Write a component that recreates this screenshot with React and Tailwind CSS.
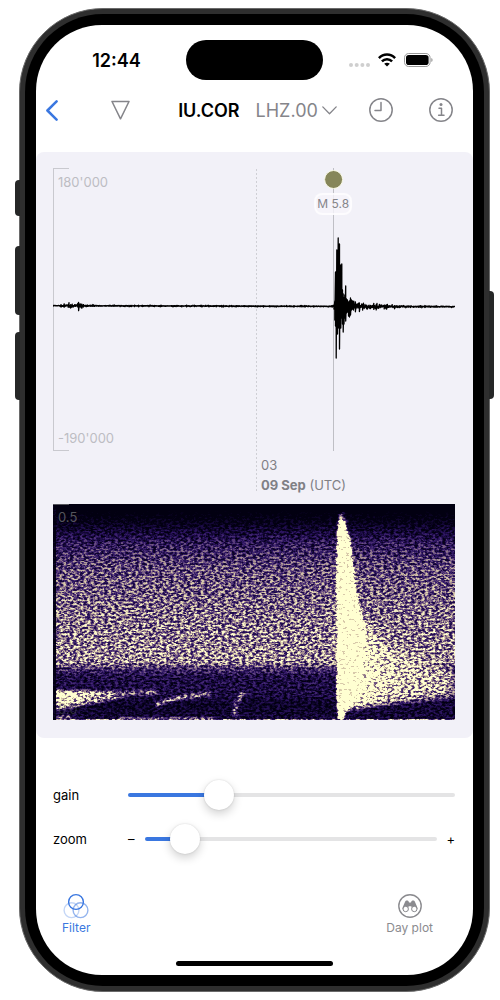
import { useState } from "react";

function makeRandom(seed) {
  let s = seed;
  return () => {
    s = (s * 1664525 + 1013904223) % 4294967296;
    return s / 4294967296;
  };
}

// Main arrival: x, upper and lower extent relative to the baseline.
const EVENT = [
  [280.5, 1, 3], [281.3, 5, 14], [282, 34, 20], [282.7, 20, 52], [283.3, 56, 20],
  [284, 40, 28], [284.7, 68, 17], [285.3, 62, 22], [286, 62, 43], [286.7, 30, 20],
  [287.3, 41, 22], [288.3, 42, 12], [289, 16, 18], [289.7, 12, 26], [290.5, 8, 18],
  [291.3, 11, 12], [292.2, 20, 15], [293, 7, 7], [294, 6, 6], [295, 4, 10],
  [296, 5, 11], [297, 8, 9], [298, 6, 4], [299, 5, 3], [300, 4, 4],
];

function noiseAmplitude(x) {
  if (x < 7) return 0.8;
  if (x < 30) return 1.4 + 5 * Math.exp(-Math.pow((x - 17) / 4, 2)) + (x > 24 && x < 29 ? 4 : 0);
  if (x < 42) return 1.7;
  if (x > 300) return 0.9 + 8 * Math.exp(-(x - 300) / 24);
  return 0.9;
}

function waveformPath() {
  const rand = makeRandom(11);
  let d = "M0 137";
  for (let x = 0; x <= 402; x += 0.8) {
    if (x > 280 && x < 300.5) continue;
    const a = noiseAmplitude(x);
    const base = 137.7 + x / 400;
    const spike = rand() > 0.75 ? 1 : 0.5;
    d += `L${x.toFixed(1)} ${(base - a * spike * rand()).toFixed(1)}V${(base + a * spike * rand()).toFixed(1)}`;
    if (x <= 280 && x + 0.8 > 280) {
      EVENT.forEach(([ex, up, down]) => {
        d += `L${ex + 0.5} ${138 - up}V${138 + down}`;
      });
    }
  }
  return d;
}

const WAVEFORM = waveformPath();

function SideButtons() {
  return (
    <div aria-hidden="true">
      <span className="absolute -left-[5px] top-[171px] h-9 w-[5px] rounded-l-sm bg-[#262727]" />
      <span className="absolute -left-[5px] top-[237px] h-[69px] w-[5px] rounded-l-sm bg-[#262727]" />
      <span className="absolute -left-[5px] top-[323px] h-[68px] w-[5px] rounded-l-sm bg-[#262727]" />
      <span className="absolute -right-[5px] top-[282px] h-[108px] w-[5px] rounded-r-sm bg-[#262727]" />
    </div>
  );
}

function StatusBar() {
  return (
    <div className="grid grid-cols-[1fr_137px_1fr] items-center pt-[15px]">
      <span className="pt-px pl-[11px] text-center text-[18px] leading-6 font-semibold text-black">12:44</span>
      <span className="h-10 rounded-full bg-black" />
      <div className="flex items-center justify-center gap-2 pr-[14px]">
        <svg width="21" height="14" viewBox="0 0 21 14" fill="#cfcfcf" aria-hidden="true">
          <circle cx="2" cy="12" r="2" /><circle cx="7.7" cy="12" r="2" />
          <circle cx="13.4" cy="12" r="2" /><circle cx="19" cy="12" r="2" />
        </svg>
        <svg width="18" height="14" viewBox="0 0 18 14" aria-hidden="true">
          <g fill="none" stroke="#000" strokeWidth="2.5">
            <path d="M.9 5.2C5.4 .4 12.6 .4 17.1 5.2" />
            <path d="M3.9 8.4C6.7 5.5 11.3 5.5 14.1 8.4" />
          </g>
          <path d="M9 13.6L6.2 10.8C7.8 9.3 10.2 9.3 11.8 10.8Z" fill="#000" />
        </svg>
        <svg width="29" height="14" viewBox="0 0 29 14" aria-hidden="true">
          <rect x=".5" y=".5" width="25.6" height="13" rx="4.2" fill="none" stroke="#999" />
          <rect x="2" y="2" width="22.6" height="10" rx="2.8" fill="#000" />
          <path d="M27.4 5V9C28.9 8.3 28.9 5.7 27.4 5Z" fill="#888" />
        </svg>
      </div>
    </div>
  );
}

function Header() {
  return (
    <header className="flex h-[60px] items-center pr-5 pl-[10px] text-[#85858a]">
      <div className="flex items-center gap-[53px]">
        <button type="button" aria-label="Back" className="text-[#3a77e0]">
          <svg width="12" height="21" viewBox="0 0 12 21" fill="none" stroke="currentColor" strokeWidth="2.5" strokeLinecap="round" strokeLinejoin="round">
            <path d="M10.6 1.4L1.4 10.5L10.6 19.6" />
          </svg>
        </button>
        <button type="button" aria-label="Stations">
          <svg width="19" height="20" viewBox="0 0 19 20" fill="none" stroke="currentColor" strokeWidth="1.5" strokeLinejoin="round">
            <path d="M1 1.5H18L9.5 18.8Z" />
          </svg>
        </button>
      </div>
      <div className="flex flex-1 items-center justify-center gap-4 pt-px pl-4 text-[18px] leading-6">
        <h1 className="font-semibold text-black">IU.COR</h1>
        <button type="button" className="flex items-center gap-1">
          LHZ.00
          <svg width="15" height="9" viewBox="0 0 15 9" fill="none" stroke="currentColor" strokeWidth="1.3" strokeLinecap="round" strokeLinejoin="round" aria-hidden="true">
            <path d="M.8 .9L7.5 7.8L14.2 .9" />
          </svg>
        </button>
      </div>
      <div className="flex items-center gap-9">
        <button type="button" aria-label="Time range">
          <svg width="24" height="24" viewBox="0 0 24 24" fill="none" stroke="currentColor" strokeWidth="1.5" strokeLinecap="round" strokeLinejoin="round">
            <circle cx="12" cy="12" r="11.2" /><path d="M12 4.6V12.4H6" />
          </svg>
        </button>
        <button type="button" aria-label="Info">
          <svg width="24" height="24" viewBox="0 0 24 24" fill="none" stroke="currentColor" strokeWidth="1.5" strokeLinecap="round" strokeLinejoin="round">
            <circle cx="12" cy="12" r="11.2" />
            <circle cx="12" cy="6.6" r="1.5" fill="currentColor" stroke="none" />
            <path d="M10 10.3H12.5V17.3M9.6 17.3H15" />
          </svg>
        </button>
      </div>
    </header>
  );
}

function Seismogram() {
  return (
    <div className="relative">
      <svg className="absolute inset-y-0 left-[50.5%] h-full w-px" aria-hidden="true">
        <path d="M.5 1V324" stroke="#cfcfd5" strokeDasharray="2 2" />
      </svg>
      <div className="relative text-[13px] leading-5 text-[#bdbdc3]">
        <span className="absolute top-0 bottom-0 left-0 w-4 border-y border-[#c9c9cf]" />
        <span className="absolute top-0 bottom-0 left-0 border-l border-[#c9c9cf]" />
        <span className="absolute top-1 left-[5px]">180'000</span>
        <span className="absolute bottom-[3px] left-[5px]">-190'000</span>
        <span className="absolute inset-y-0 left-[69.6%] border-l border-[#bfbfc5]" />
        <svg viewBox="0 0 402 283" preserveAspectRatio="none" className="relative block h-[283px] w-full" role="img" aria-label="Seismogram">
          <path d={WAVEFORM} fill="none" stroke="#000" strokeWidth="1.3" strokeLinejoin="round" />
        </svg>
        <div className="absolute top-[2px] left-[69.7%] flex -translate-x-1/2 flex-col items-center gap-1">
          <span className="size-[19px] rounded-full border border-[#fafae6] bg-[#86865a]" />
          <span className="rounded-lg border-2 border-white/70 bg-[#f6f5fa]/80 px-px text-[12px] leading-[18px] whitespace-nowrap text-[#85858a]">M 5.8</span>
        </div>
      </div>
      <div className="ml-[50.5%] flex flex-col pt-1 pl-[5px] text-[13px] leading-5 text-[#808085]">
        <span>03</span>
        <span><b>09 Sep</b> (UTC)</span>
      </div>
    </div>
  );
}

function Spectrogram() {
  return (
    <div className="relative bg-[#02000f] text-[13px] leading-5 text-[#55555c]">
      <svg viewBox="0 0 402 216" preserveAspectRatio="none" className="block h-[216px] w-full" role="img" aria-label="Spectrogram">
        <defs>
          <linearGradient id="band" x1="0" y1="0" x2="0" y2="1">
            <stop offset="0" stopColor="#101010" />
            <stop offset=".09" stopColor="#262626" />
            <stop offset=".18" stopColor="#444" />
            <stop offset=".3" stopColor="#5a5a5a" />
            <stop offset=".5" stopColor="#676767" />
            <stop offset=".73" stopColor="#707070" />
            <stop offset=".765" stopColor="#4e4e4e" />
            <stop offset=".8" stopColor="#3a3a3a" />
            <stop offset=".88" stopColor="#383838" />
            <stop offset=".93" stopColor="#2c2c2c" />
            <stop offset="1" stopColor="#323232" />
          </linearGradient>
          <linearGradient id="coda" x1="0" y1="0" x2="1" y2="0">
            <stop offset="0" stopColor="#ccc" />
            <stop offset=".3" stopColor="#9c9c9c" />
            <stop offset=".6" stopColor="#888" />
            <stop offset="1" stopColor="#7c7c7c" />
          </linearGradient>
          <filter id="soft1" x="-50%" y="-50%" width="200%" height="200%"><feGaussianBlur stdDeviation="1" /></filter>
          <filter id="soft4" x="-50%" y="-50%" width="200%" height="200%"><feGaussianBlur stdDeviation="5" /></filter>
          <filter id="heat" filterUnits="userSpaceOnUse" x="0" y="0" width="402" height="216" colorInterpolationFilters="sRGB">
            <feTurbulence type="fractalNoise" baseFrequency="0.29 0.47" numOctaves="3" seed="7" />
            <feColorMatrix values="0 0 0 2.6 -0.8  0 0 0 2.6 -0.8  0 0 0 2.6 -0.8  0 0 0 0 1" result="noise" />
            <feComposite in="SourceGraphic" in2="noise" operator="arithmetic" k1="1.8" k2="1.25" k3="0" k4="-0.28" />
            <feComponentTransfer>
              <feFuncR type="table" tableValues="0.01 0.08 0.19 0.37 0.62 0.84 1" />
              <feFuncG type="table" tableValues="0 0.03 0.09 0.26 0.53 0.78 1" />
              <feFuncB type="table" tableValues="0.07 0.22 0.4 0.49 0.56 0.66 0.82" />
            </feComponentTransfer>
            <feGaussianBlur stdDeviation="0.4" edgeMode="duplicate" />
          </filter>
        </defs>
        <g filter="url(#heat)">
          <rect width="402" height="216" fill="url(#band)" />
          <g filter="url(#soft1)">
            <path d="M3 186L58 187L90 188L58 196L28 202L3 207Z" fill="#747474" />
            <path d="M3 187L45 189L28 196L3 201Z" fill="#a0a0a0" />
            <path d="M60 190L105 188" stroke="#606060" strokeWidth="5" fill="none" />
            <path d="M102 201C118 194 132 193 158 190" stroke="#707070" strokeWidth="4" fill="none" />
            <path d="M182 212C181 203 184 195 191 188" stroke="#646464" strokeWidth="5" fill="none" />
            <path d="M3 213H20M66 215H160" stroke="#747474" strokeWidth="2.5" />
          </g>
          <g filter="url(#soft4)">
            <path d="M285 100L308 114L330 142L402 169V192L330 200L285 207Z" fill="url(#coda)" />
            <path d="M288 75L298 110L315 140L325 180L300 202H288Z" fill="#b4b4b4" />
          </g>
          <path d="M284 0V216H276V0Z" fill="url(#band)" />
          <path d="M292 208L330 203L402 196V216H292Z" fill="#303030" filter="url(#soft1)" />
          <g filter="url(#soft1)">
            <path d="M286 8L290 8L294 18V26H284Z" fill="#505050" />
            <path d="M285 26L287 14L291 17L297 36L300 65L303 88L308 112L311 140L310 175L304 197L293 205L290 216H285L284 180L284 120L284 60Z" fill="#e4e4e4" />
          </g>
          <path d="M0 0H3V216H0Z" fill="#202020" />
          <path d="M3 215.5H402" stroke="#707070" strokeWidth="1" />
        </g>
      </svg>
      <span className="absolute top-0 left-0 w-4 border-t border-[#55555c]" />
      <span className="absolute top-[3px] left-[5px]">0.5</span>
      <span className="absolute bottom-[1px] left-[5px] opacity-50">0.0</span>
    </div>
  );
}

function Slider({ id, value, onChange }) {
  return (
    <input
      id={id}
      type="range"
      min="0"
      max="1000"
      value={value}
      onChange={(e) => onChange(Number(e.target.value))}
      style={{ backgroundImage: `linear-gradient(to right, #3a77e0 ${value / 10}%, #e4e4e5 ${value / 10}%)` }}
      className="h-1 min-w-0 flex-1 appearance-none rounded-full [&::-webkit-slider-thumb]:size-[30px] [&::-webkit-slider-thumb]:appearance-none [&::-webkit-slider-thumb]:rounded-full [&::-webkit-slider-thumb]:bg-white [&::-webkit-slider-thumb]:shadow-[0_4px_10px_rgba(0,0,0,0.18),0_0_2px_rgba(0,0,0,0.15)]"
    />
  );
}

function Controls() {
  const [gain, setGain] = useState(257);
  const [zoom, setZoom] = useState(96);
  return (
    <div className="mt-[35px] pr-[18px] pl-[17px] text-[13px] leading-5 text-black">
      <div className="flex h-11 items-center">
        <label htmlFor="gain" className="w-[75px]">gain</label>
        <Slider id="gain" value={gain} onChange={setGain} />
      </div>
      <div className="flex h-11 items-center">
        <label htmlFor="zoom" className="w-[75px]">zoom</label>
        <span className="w-[17px]">–</span>
        <Slider id="zoom" value={zoom} onChange={setZoom} />
        <span className="w-[18px] text-right">+</span>
      </div>
    </div>
  );
}

function TabBar() {
  return (
    <nav className="mt-8 flex justify-between pr-10 pl-[26px] text-[12px] leading-4">
      <button type="button" className="flex flex-col items-center gap-px text-[#3a77e0]">
        <svg width="26" height="26" viewBox="0 0 26 26" fill="none" stroke="currentColor" strokeWidth="1.4" aria-hidden="true">
          <circle cx="8.5" cy="17.2" r="7.4" opacity=".3" />
          <circle cx="17.5" cy="17.2" r="7.4" opacity=".55" />
          <circle cx="13" cy="9" r="7.4" />
        </svg>
        Filter
      </button>
      <button type="button" className="flex flex-col items-center gap-px text-[#8b8b8f]">
        <svg width="26" height="26" viewBox="0 0 26 26" aria-hidden="true">
          <circle cx="13" cy="13" r="11.2" fill="none" stroke="currentColor" strokeWidth="1.4" />
          <path d="M8.2 8.5C8.4 7 11.4 7 11.7 8.5L12 9.4H14L14.3 8.5C14.6 7 17.6 7 17.8 8.5L20.4 14.5C20.9 15.7 20.2 16.6 19.8 16L14.6 14.4L14.3 13.2H11.7L11.4 14.4L6.2 16C5.8 16.6 5.1 15.7 5.6 14.5Z" fill="currentColor" />
          <g fill="#fff" stroke="currentColor" strokeWidth="1">
            <circle cx="8.7" cy="16" r="2.7" /><circle cx="17.3" cy="16" r="2.7" />
          </g>
        </svg>
        Day plot
      </button>
    </nav>
  );
}

export default function App() {
  return (
    <div className="min-h-screen bg-white pt-2 pr-[10px] pb-2 pl-[19px] font-['Inter',sans-serif]">
      <div className="relative rounded-[84px] border border-[#6a6a6a] bg-[#2e2e2e] p-[5px]">
        <SideButtons />
        <div className="rounded-[78px] bg-black p-[11px]">
          <main className="overflow-hidden rounded-[66px] bg-white pb-[9px]">
            <StatusBar />
            <Header />
            <section className="mt-3 flex flex-col gap-[9px] rounded-lg bg-[#f2f1f8] pt-4 pr-[18px] pb-[18px] pl-[17px]">
              <Seismogram />
              <Spectrogram />
            </section>
            <Controls />
            <TabBar />
            <div className="mx-auto mt-[25px] h-[5px] w-[36%] rounded-full bg-black" />
          </main>
        </div>
      </div>
    </div>
  );
}
